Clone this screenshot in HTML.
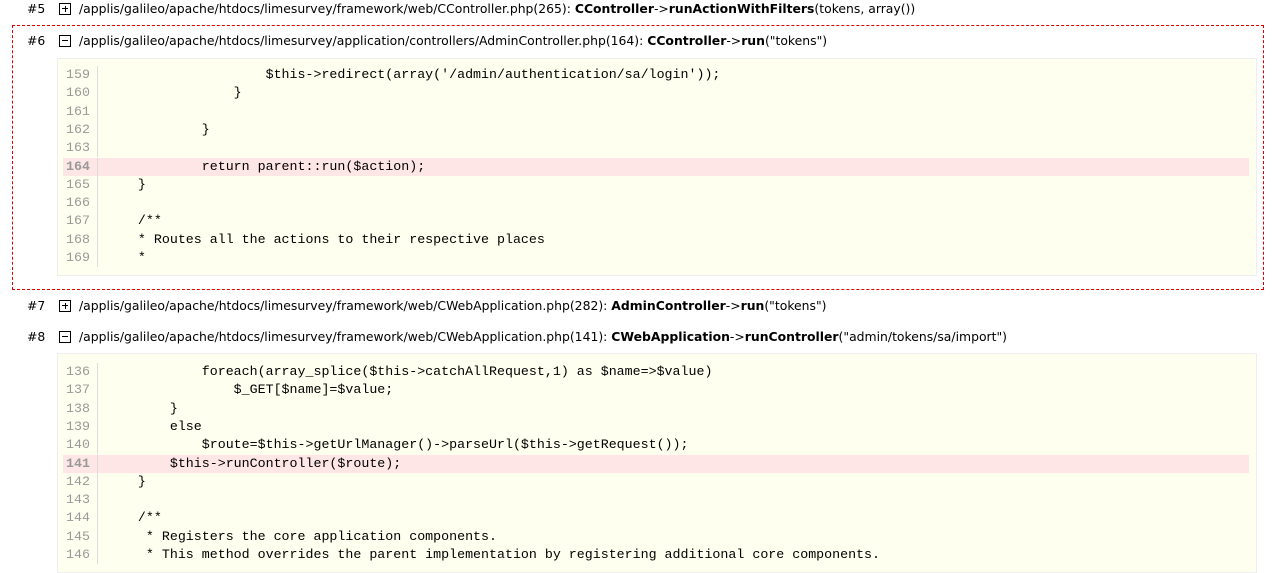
<!DOCTYPE html>
<html><head><meta charset="utf-8"><style>
*{margin:0;padding:0;box-sizing:border-box}
body{width:1277px;height:563px;background:#fff;position:relative;overflow:hidden;font-family:"DejaVu Sans","Liberation Sans",sans-serif;font-size:12.4px;color:#000}
.h{position:absolute;left:0;height:18px;line-height:18px;white-space:nowrap}
.h .n{position:absolute;left:27px}
.h .b{position:absolute;left:59px;top:3px;width:12px;height:12px;border:1px solid #000}
.h .b:before{content:"";position:absolute;left:2px;top:4px;width:6px;height:1px;background:#000}
.h .b.p:after{content:"";position:absolute;left:4.5px;top:2px;width:1px;height:6px;background:#000}
.h .t{position:absolute;left:79px}
.box{position:absolute;left:12px;top:25px;width:1252px;height:265px;border:1px dashed #d00}
.code{position:absolute;left:57px;width:1200px;background:#fffff0;border:1px solid #eee}
.ln{position:absolute;height:18.3px;line-height:18.3px;left:0;right:0;font-family:"Liberation Mono","DejaVu Sans Mono",monospace;font-size:13.3px;white-space:pre;color:#000}
.ln .no{position:absolute;left:8px;width:32px;color:#999;}
.ln .sep{position:absolute;left:39px;top:0;bottom:0;border-left:1px solid #ddd}
.ln .c{position:absolute;left:48px}
.ln.hl{background:#ffe6e6;left:5px;right:7px}
.ln.hl .no{left:3px;font-weight:bold;color:#999}
.ln.hl .sep{left:34px}
.ln.hl .c{left:43px}
</style></head><body>
<div class="h" style="top:0"><span class="n">#5</span><span class="b p"></span><span class="t">/applis/galileo/apache/htdocs/limesurvey/framework/web/CController.php(265): <b>CController</b>-&gt;<b>runActionWithFilters</b>(tokens, array())</span></div>
<div class="box"></div>
<div class="h" style="top:32px"><span class="n">#6</span><span class="b"></span><span class="t">/applis/galileo/apache/htdocs/limesurvey/application/controllers/AdminController.php(164): <b>CController</b>-&gt;<b>run</b>("tokens")</span></div>
<div class="code" style="top:58px;height:218px">
<div class="ln" style="top:7px"><span class="no">159</span><span class="sep"></span><span class="c">                    $this-&gt;redirect(array('/admin/authentication/sa/login'));</span></div>
<div class="ln" style="top:25.3px"><span class="no">160</span><span class="sep"></span><span class="c">                }</span></div>
<div class="ln" style="top:43.6px"><span class="no">161</span><span class="sep"></span><span class="c"></span></div>
<div class="ln" style="top:61.9px"><span class="no">162</span><span class="sep"></span><span class="c">            }</span></div>
<div class="ln" style="top:80.2px"><span class="no">163</span><span class="sep"></span><span class="c"></span></div>
<div class="ln hl" style="top:98.5px"><span class="no">164</span><span class="sep"></span><span class="c">            return parent::run($action);</span></div>
<div class="ln" style="top:116.8px"><span class="no">165</span><span class="sep"></span><span class="c">    }</span></div>
<div class="ln" style="top:135.1px"><span class="no">166</span><span class="sep"></span><span class="c"></span></div>
<div class="ln" style="top:153.4px"><span class="no">167</span><span class="sep"></span><span class="c">    /**</span></div>
<div class="ln" style="top:171.7px"><span class="no">168</span><span class="sep"></span><span class="c">    * Routes all the actions to their respective places</span></div>
<div class="ln" style="top:190px"><span class="no">169</span><span class="sep"></span><span class="c">    *</span></div>
</div>
<div class="h" style="top:297px"><span class="n">#7</span><span class="b p"></span><span class="t">/applis/galileo/apache/htdocs/limesurvey/framework/web/CWebApplication.php(282): <b>AdminController</b>-&gt;<b>run</b>("tokens")</span></div>
<div class="h" style="top:328px"><span class="n">#8</span><span class="b"></span><span class="t">/applis/galileo/apache/htdocs/limesurvey/framework/web/CWebApplication.php(141): <b>CWebApplication</b>-&gt;<b>runController</b>("admin/tokens/sa/import")</span></div>
<div class="code" style="top:353px;height:220px">
<div class="ln" style="top:9px"><span class="no">136</span><span class="sep"></span><span class="c">            foreach(array_splice($this-&gt;catchAllRequest,1) as $name=&gt;$value)</span></div>
<div class="ln" style="top:27.3px"><span class="no">137</span><span class="sep"></span><span class="c">                $_GET[$name]=$value;</span></div>
<div class="ln" style="top:45.6px"><span class="no">138</span><span class="sep"></span><span class="c">        }</span></div>
<div class="ln" style="top:63.9px"><span class="no">139</span><span class="sep"></span><span class="c">        else</span></div>
<div class="ln" style="top:82.2px"><span class="no">140</span><span class="sep"></span><span class="c">            $route=$this-&gt;getUrlManager()-&gt;parseUrl($this-&gt;getRequest());</span></div>
<div class="ln hl" style="top:100.5px"><span class="no">141</span><span class="sep"></span><span class="c">        $this-&gt;runController($route);</span></div>
<div class="ln" style="top:118.8px"><span class="no">142</span><span class="sep"></span><span class="c">    }</span></div>
<div class="ln" style="top:137.1px"><span class="no">143</span><span class="sep"></span><span class="c"></span></div>
<div class="ln" style="top:155.4px"><span class="no">144</span><span class="sep"></span><span class="c">    /**</span></div>
<div class="ln" style="top:173.7px"><span class="no">145</span><span class="sep"></span><span class="c">     * Registers the core application components.</span></div>
<div class="ln" style="top:192px"><span class="no">146</span><span class="sep"></span><span class="c">     * This method overrides the parent implementation by registering additional core components.</span></div>
</div>
</body></html>
